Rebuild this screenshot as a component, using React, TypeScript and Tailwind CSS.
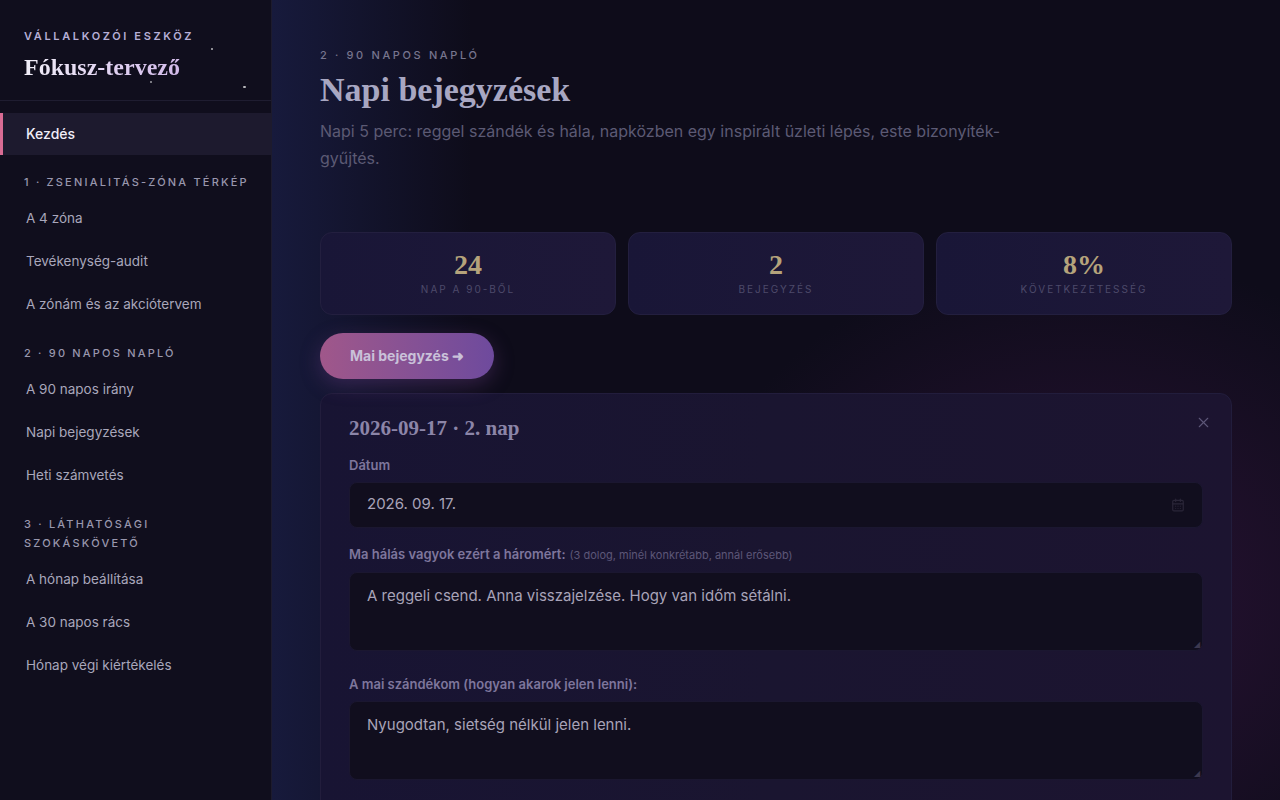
import { CalendarDays, X } from 'lucide-react'

const sans = { fontFamily: 'Inter, "Noto Sans", sans-serif' }
const serif = { fontFamily: '"Liberation Serif", "DejaVu Serif", serif' }

type NavSection = { title: string; items: string[] }

const sections: NavSection[] = [
  { title: '1 · Zsenialitás-zóna térkép', items: ['A 4 zóna', 'Tevékenység-audit', 'A zónám és az akciótervem'] },
  { title: '2 · 90 napos napló', items: ['A 90 napos irány', 'Napi bejegyzések', 'Heti számvetés'] },
  { title: '3 · Láthatósági szokáskövető', items: ['A hónap beállítása', 'A 30 napos rács', 'Hónap végi kiértékelés'] },
]

const stats = [
  { value: '24', label: 'Nap a 90-ből' },
  { value: '2', label: 'Bejegyzés' },
  { value: '8%', label: 'Következetesség' },
]

function Sidebar() {
  return (
    <aside className="relative w-[272px] shrink-0 h-full bg-[#100e1d] border-r border-[#1d1b2d] flex flex-col">
      {/* tiny stars */}
      <span className="absolute left-[211px] top-[48px] w-[2px] h-[2px] rounded-full bg-white/70" />
      <span className="absolute left-[150px] top-[81px] w-[2px] h-[2px] rounded-full bg-white/60" />
      <span className="absolute left-[243px] top-[86px] w-[3px] h-[2px] rounded-full bg-white/70" />

      <div className="px-6 pt-[28px] pb-[17px] border-b border-[#1f1d31]">
        <div className="text-[11px] font-semibold tracking-[0.24em] text-[#b6aed6] uppercase">Vállalkozói eszköz</div>
        <div style={serif} className="mt-[6px] text-[24px] font-bold leading-8 bg-gradient-to-r from-[#f1eef8] to-[#c6a5e4] bg-clip-text text-transparent">
          Fókusz-tervező
        </div>
      </div>

      <nav className="pt-3">
        <div className="h-[42px] flex items-center pl-[23px] bg-[#1d1a2e] border-l-[3px] border-[#d86b93] text-[14px] font-medium text-[#f1eef8]">
          Kezdés
        </div>
        {sections.map(s => (
          <div key={s.title} className="pt-[18px]">
            <div className="pl-6 pr-3 text-[11px] font-medium uppercase tracking-[0.2em] leading-[19px] text-[#9997ad]">{s.title}</div>
            <div className="pt-[5px]">
              {s.items.map(it => (
                <div key={it} className="h-[43px] flex items-center pl-[26px] text-[13.5px] text-[#a9a7bb]">{it}</div>
              ))}
            </div>
          </div>
        ))}
      </nav>
    </aside>
  )
}

function Field({ label, note, className, children }: { label: string; note?: string; className?: string; children: React.ReactNode }) {
  return (
    <div className={`flex flex-col ${className ?? ''}`}>
      <div className="text-[13px] font-semibold text-[#7e769c] leading-5">
        {label}
        {note && <span className="ml-1 text-[11px] font-normal text-[#5d5778]">{note}</span>}
      </div>
      <div className="mt-[7px]">{children}</div>
    </div>
  )
}

function Main() {
  return (
    <main className="relative flex-1 h-full overflow-hidden bg-[#0e0c1a]">
      {/* background glows */}
      <div className="absolute inset-y-0 left-0 w-[200px] bg-gradient-to-r from-[#171a3c] to-transparent" />
      <div className="absolute right-[-200px] bottom-[-150px] w-[800px] h-[700px] rounded-full bg-[radial-gradient(closest-side,#2a1235,transparent)]" />

      <div className="relative px-12 pt-[47px]" style={sans}>
        <div className="text-[11px] font-medium uppercase tracking-[0.24em] text-[#77758e]">2 · 90 napos napló</div>
        <h1 style={serif} className="mt-[6px] text-[34px] font-bold leading-10 text-[#a8a7c2]">Napi bejegyzések</h1>
        <p className="mt-[8px] max-w-[690px] text-[16px] leading-[27px] text-[#5c5a74]">
          Napi 5 perc: reggel szándék és hála, napközben egy inspirált üzleti lépés, este bizonyíték-gyűjtés.
        </p>

        <div className="mt-[60px] grid grid-cols-3 gap-3">
          {stats.map(s => (
            <div key={s.label} className="h-[83px] rounded-xl border border-[#231f3f] bg-gradient-to-r from-[#191637] to-[#1e1838] flex flex-col items-center justify-center">
              <div style={serif} className="text-[28px] font-bold leading-8 text-[#b5a37b]">{s.value}</div>
              <div className="mt-[1px] text-[10px] uppercase tracking-[0.2em] text-[#4d4a6a]">{s.label}</div>
            </div>
          ))}
        </div>

        <button className="mt-[18px] h-[46px] px-[30px] rounded-full bg-gradient-to-r from-[#a0578a] to-[#6e4a9d] text-[14px] font-bold text-[#c9c1d9] shadow-[0_6px_20px_rgba(120,70,150,0.35)]">
          Mai bejegyzés ➜
        </button>

        <div className="mt-[14px] rounded-xl border border-[#221d3c] bg-gradient-to-r from-[#181433] via-[#1a1530] to-[#1c1430] px-[28px] pt-[18px] pb-8">
          <div className="flex items-start justify-between">
            <h2 style={serif} className="text-[21px] font-bold leading-8 text-[#8c85a8]">2026-09-17 · 2. nap</h2>
            <X size={17} strokeWidth={1.5} className="mt-[2px] -mr-[9px] text-[#5d5778]" />
          </div>

          <div className="mt-[11px] flex flex-col">
            <Field label="Dátum">
              <div className="h-[46px] rounded-lg bg-[#110e1e] border border-[#1b1730] flex items-center justify-between px-[17px]">
                <span className="text-[15px] text-[#a8a3b8]">2026. 09. 17.</span>
                <CalendarDays size={14} className="text-[#2a2638]" />
              </div>
            </Field>
            <Field className="mt-[16px]" label="Ma hálás vagyok ezért a háromért:" note="(3 dolog, minél konkrétabb, annál erősebb)">
              <div className="relative h-[79px] rounded-lg bg-[#110e1e] border border-[#1b1730] px-[17px] pt-[12px] text-[15px] text-[#a8a3b8]">
                A reggeli csend. Anna visszajelzése. Hogy van időm sétálni.
                <span className="absolute right-[2px] bottom-[2px] text-[8px] leading-none text-[#3c3850]">◢</span>
              </div>
            </Field>
            <Field className="mt-[23px]" label="A mai szándékom (hogyan akarok jelen lenni):">
              <div className="relative h-[79px] rounded-lg bg-[#110e1e] border border-[#1b1730] px-[17px] pt-[12px] text-[15px] text-[#a8a3b8]">
                Nyugodtan, sietség nélkül jelen lenni.
                <span className="absolute right-[2px] bottom-[2px] text-[8px] leading-none text-[#3c3850]">◢</span>
              </div>
            </Field>
          </div>
        </div>
      </div>
    </main>
  )
}

export default function App() {
  return (
    <div className="w-[1280px] h-[800px] flex overflow-hidden bg-[#0e0c1a]" style={sans}>
      <Sidebar />
      <Main />
    </div>
  )
}
